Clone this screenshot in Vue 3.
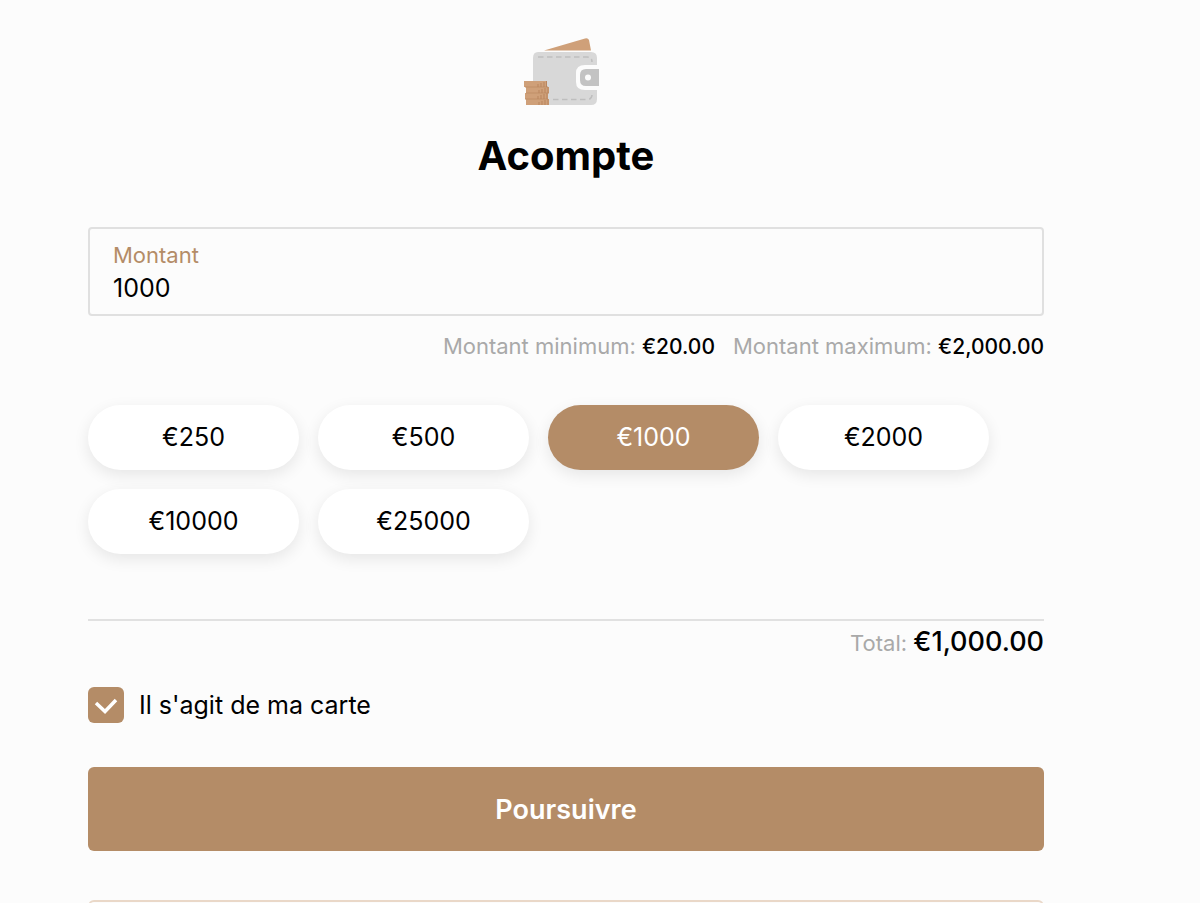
<script setup>
import { computed, ref } from 'vue'

const presets = [250, 500, 1000, 2000, 10000, 25000]
const amount = ref('1000')
const ownCard = ref(true)

const formatEuro = (value) =>
  '€' + Number(value || 0).toLocaleString('en-US', { minimumFractionDigits: 2, maximumFractionDigits: 2 })

const total = computed(() => formatEuro(amount.value))
</script>

<template>
  <main class="page">
    <form class="deposit" @submit.prevent>
      <header class="head">
        <svg class="wallet" viewBox="0 0 84 68" aria-hidden="true">
          <path d="M20 12.500 61 .4Q64-.5 65 2l2 10.500Z" fill="#cfa079" />
          <path d="M14 14h53q6 0 6 6v41q0 6-6 6H14q-5 0-5-6V20q0-6 5-6Z" fill="#d8d8d8" />
          <path d="M14 19H63q5 0 5 5M29 61.500H63q5 0 5-5" fill="none" stroke="#bebebe" stroke-width="1.500" stroke-dasharray="5.500 3.500" />
          <path d="M76 27H61q-9 0-9 8v9q0 8 9 8h15Z" fill="#fcfcfc" />
          <path d="M75 31H62q-6 0-6 6v5q0 6 6 6h13Z" fill="#c3c3c3" />
          <circle cx="64" cy="39.500" r="3" fill="#fcfcfc" />
          <path d="M0 43h23v6H0ZM2 49h23v6H2ZM1 55h23v6H1ZM2 61h23v6H2Z" fill="#cfa079" />
          <path d="M1 49h23M2 55h23M1 61h23" stroke="#c08f69" stroke-width="1" />
          <path d="M14 46v3M17 45v4M20 44v5M22.500 43v6M15 52v3M18 51v4M21 50v5M24 49v6M14 58v3M17 57v4M20 56v5M23 55v6M15 64v3M18 63v4M21 62v5M24 61v6" stroke="#b9855e" stroke-width="1" />
        </svg>
        <h1>Acompte</h1>
      </header>

      <div class="field">
        <label for="amount">Montant</label>
        <input id="amount" v-model="amount" type="text" inputmode="numeric" />
      </div>

      <p class="limits">
        <span>Montant minimum: <strong>€20.00</strong></span>
        <span>Montant maximum: <strong>€2,000.00</strong></span>
      </p>

      <div class="presets">
        <button
          v-for="value in presets"
          :key="value"
          type="button"
          class="pill"
          :class="{ active: Number(amount) === value }"
          @click="amount = String(value)"
        >€{{ value }}</button>
      </div>

      <p class="total">Total: <strong>{{ total }}</strong></p>

      <label class="check">
        <input v-model="ownCard" type="checkbox" />
        <svg class="box" viewBox="0 0 36 36" aria-hidden="true">
          <path v-if="ownCard" d="m8 16 9 8.500L28 13" fill="none" stroke="#fff" stroke-width="3.500" />
        </svg>
        <span>Il s'agit de ma carte</span>
      </label>

      <button type="submit" class="submit">Poursuivre</button>
      <div class="outlined"></div>
    </form>
  </main>
</template>

<style>
html {
  background: #fcfcfc;
  scrollbar-width: none;
}
</style>

<style scoped>
.page {
  box-sizing: border-box;
  padding: 38px 156px 0 88px;
  color: #000;
  background: #fcfcfc;
  font-family: Inter, "Liberation Sans", sans-serif;
}

.deposit {
  display: flex;
  flex-direction: column;
}

button,
input {
  font: inherit;
  color: inherit;
}

button {
  cursor: pointer;
}

.head {
  display: flex;
  flex-direction: column;
  align-items: center;
  gap: 26px;
}

.wallet {
  width: 84px;
  height: 68px;
}

h1 {
  margin: 0;
  font-size: 40px;
  line-height: 48px;
  font-weight: 700;
}

.field {
  display: flex;
  flex-direction: column;
  margin-top: 47px;
  padding: 10px 23px;
  border: 2px solid #e0e0e0;
  border-radius: 4px;
}

.field label {
  font-size: 22px;
  line-height: 32px;
  color: #b48c67;
}

.field input {
  width: 100%;
  height: 33px;
  padding: 0;
  border: 0;
  outline: 0;
  background: transparent;
  font-size: 25px;
}

.limits {
  display: flex;
  flex-wrap: wrap;
  justify-content: flex-end;
  gap: 0 18px;
  margin: 14px 0 0;
  font-size: 22px;
  line-height: 32px;
  color: #a9a9a9;
}

strong {
  font-size: 21px;
  font-weight: 500;
  color: #000;
}

.presets {
  display: flex;
  flex-wrap: wrap;
  gap: 19px;
  margin-top: 42px;
}

.pill {
  width: 211px;
  height: 65px;
  padding: 0 0 1px;
  border: 0;
  border-radius: 33px;
  background: #fff;
  box-shadow: 0 5px 16px rgba(0, 0, 0, 0.09);
  font-size: 25px;
}

.pill.active {
  background: #b48c67;
  color: #fff;
}

.total {
  margin: 65px 0 0;
  border-top: 2px solid #e1e1e1;
  font-size: 22px;
  line-height: 42px;
  text-align: right;
  color: #a9a9a9;
}

.total strong {
  font-size: 27px;
}

.check {
  display: flex;
  align-items: center;
  align-self: flex-start;
  gap: 15px;
  margin-top: 23px;
  font-size: 25px;
  line-height: 36px;
  cursor: pointer;
}

.check input {
  position: absolute;
  width: 36px;
  height: 36px;
  margin: 0;
  opacity: 0;
}

.box {
  width: 36px;
  height: 36px;
  border-radius: 6px;
  background: #b48c67;
}

.submit {
  height: 84px;
  margin-top: 44px;
  border: 0;
  border-radius: 6px;
  background: #b48c67;
  color: #fff;
  font-size: 27px;
  font-weight: 600;
}

.outlined {
  height: 84px;
  box-sizing: border-box;
  margin-top: 49px;
  border: 2px solid #ead8c8;
  border-radius: 6px;
}
</style>
